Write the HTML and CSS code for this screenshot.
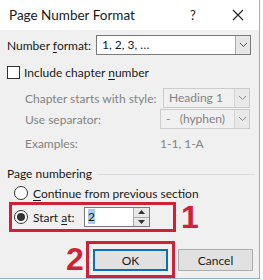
FILE: index.html
```html
<!DOCTYPE html>
<html lang="en">
<head>
  <meta charset="UTF-8">
  <title>Page Number Format</title>
  <link rel="stylesheet" href="styles.css">
</head>
<body>
  <div class="window">
    <!-- title bar -->
    <div class="titlebar">
      <span class="title">Page Number Format</span>
      <span class="help">?</span>
      <span class="close">
        <svg width="12" height="12" viewBox="0 0 12 12"><path d="M1 1 L11 11 M11 1 L1 11" stroke="#222" stroke-width="1.1" fill="none"/></svg>
      </span>
    </div>

    <div class="content">
      <div class="row row-format">
        <span class="label">Number <u>f</u>ormat:</span>
        <div class="select select-format">
          <span class="value">1, 2, 3, …</span>
          <span class="arrow">
            <svg width="9" height="6" viewBox="0 0 9 6"><path d="M1 1 L4.5 4.5 L8 1" stroke="#555" fill="none"/></svg>
          </span>
        </div>
      </div>

      <div class="row row-check">
        <span class="checkbox"></span>
        <span>Include chapter <u>n</u>umber</span>
      </div>

      <div class="sub">
        <div class="row row-style">
          <span class="sub-label">Chapter starts with style:</span>
          <div class="select disabled select-style">
            <span class="value">Heading 1</span>
            <span class="arrow">
              <svg width="9" height="6" viewBox="0 0 9 6"><path d="M1 1 L4.5 4.5 L8 1" stroke="#8a8a8a" fill="none"/></svg>
            </span>
          </div>
        </div>
        <div class="row row-sep">
          <span class="sub-label">Use separator:</span>
          <div class="select disabled select-sep">
            <span class="value">-&nbsp;&nbsp;&nbsp;(hyphen)</span>
            <span class="arrow">
              <svg width="9" height="6" viewBox="0 0 9 6"><path d="M1 1 L4.5 4.5 L8 1" stroke="#8a8a8a" fill="none"/></svg>
            </span>
          </div>
        </div>
        <div class="row row-examples">
          <span class="sub-label">Examples:</span>
          <span class="examples">1-1, 1-A</span>
        </div>
      </div>

      <div class="group-head">
        <span>Page numbering</span>
        <span class="rule"></span>
      </div>

      <div class="row row-continue">
        <span class="radio"></span>
        <span><u>C</u>ontinue from previous section</span>
      </div>

      <div class="row row-start">
        <div class="mark mark-start">
          <span class="radio checked"></span>
          <span class="start-label">Start <u>a</u>t:</span>
          <div class="spin">
            <span class="spin-value"><span class="selected">2</span></span>
            <span class="spin-buttons">
              <span class="spin-btn"><svg width="7" height="4" viewBox="0 0 7 4"><path d="M0 4 L3.5 0 L7 4 Z" fill="#333"/></svg></span>
              <span class="spin-btn"><svg width="7" height="4" viewBox="0 0 7 4"><path d="M0 0 L3.5 4 L7 0 Z" fill="#333"/></svg></span>
            </span>
          </div>
        </div>
        <span class="step step-1">1</span>
      </div>

      <div class="buttons">
        <span class="step step-2">2</span>
        <div class="mark mark-ok">
          <button class="btn btn-default">OK</button>
        </div>
        <button class="btn btn-cancel">Cancel</button>
      </div>
    </div>
  </div>
</body>
</html>
```

FILE: styles.css
```css
body {
  margin: 0;
  background: #ffffff;
  font-family: Lato, 'Open Sans', sans-serif;
  font-size: 12px;
  color: #1a1a1a;
  white-space: nowrap;
}

u {
  text-decoration: underline;
  text-underline-offset: 2px;
}

.window {
  width: 259px;
  height: 278px;
  background: #f0f0f0;
  border-right: 1px solid #8db2d6;
  border-bottom: 1px solid #8db2d6;
  overflow: hidden;
}

/* title bar */
.titlebar {
  height: 30px;
  background: #ffffff;
  display: flex;
  align-items: center;
  padding-left: 9px;
}

.title {
  font-size: 13.5px;
  width: 181px;
}

.help {
  font-size: 13px;
  width: 42px;
}

.close {
  display: flex;
}

.row {
  display: flex;
  align-items: center;
  height: 20px;
}

.row > * {
  flex-shrink: 0;
}

/* number format */
.row-format {
  margin-top: 5px;
  padding-left: 7px;
}

.label {
  width: 89px;
}

.select {
  display: flex;
  height: 20px;
  box-sizing: border-box;
  background: #ffffff;
  border: 1px solid #7a7a7a;
}

.select .value {
  flex: 1;
  padding-left: 5px;
  line-height: 18px;
}

.select .arrow {
  width: 14px;
  display: flex;
  align-items: center;
  justify-content: center;
  background: #e6e6e6;
  border-left: 1px solid #acacac;
}

.select-format {
  width: 155px;
}

.select.disabled {
  background: #f0f0f0;
  border-color: #cccccc;
  color: #838383;
}

.select.disabled .arrow {
  background: #e9e9e9;
  border-left-color: #d4d4d4;
}

/* checkbox */
.row-check {
  margin-top: 7px;
  padding-left: 7px;
}

.checkbox {
  width: 11px;
  height: 11px;
  border: 1px solid #333333;
  background: #ffffff;
  margin-right: 4px;
}

/* chapter options (disabled) */
.sub {
  padding-left: 25px;
  color: #838383;
}

.row-style {
  margin-top: 6px;
}

.row-style .sub-label {
  width: 138px;
}

.select-style {
  width: 87px;
}

.row-sep {
  margin-top: 1px;
}

.row-sep .sub-label {
  width: 135px;
}

.select-sep {
  width: 90px;
}

.row-examples {
  margin-top: 4px;
}

.row-examples .sub-label {
  width: 135px;
}

/* page numbering group */
.group-head {
  display: flex;
  align-items: center;
  height: 20px;
  margin-top: 10px;
  padding-left: 7px;
}

.rule {
  flex: 1;
  height: 1px;
  background: #dcdcdc;
  margin: 2px 4px 0 6px;
}

.radio {
  width: 12px;
  height: 12px;
  border: 1px solid #333333;
  border-radius: 50%;
  background: #ffffff;
  margin-right: 5px;
  display: flex;
  align-items: center;
  justify-content: center;
}

.radio.checked::after {
  content: "";
  width: 8px;
  height: 8px;
  border-radius: 50%;
  background: #333333;
}

.row-continue {
  height: 18px;
  margin-top: 1px;
  padding-left: 14px;
}

.row-start {
  height: 30px;
  padding-left: 9px;
}

.mark {
  border: 3px solid #cf2236;
  box-sizing: border-box;
}

.mark-start {
  width: 167px;
  height: 30px;
  display: flex;
  align-items: center;
  padding-left: 2px;
}

.start-label {
  width: 51px;
}

.spin {
  display: flex;
  width: 66px;
  height: 20px;
  box-sizing: border-box;
  background: #ffffff;
  border: 1px solid #7a7a7a;
}

.spin-value {
  flex: 1;
  padding-left: 3px;
  line-height: 18px;
}

.selected {
  background: #a9cdf0;
}

.spin-buttons {
  width: 15px;
  display: flex;
  flex-direction: column;
  border-left: 1px solid #acacac;
}

.spin-btn {
  flex: 1;
  display: flex;
  align-items: center;
  justify-content: center;
  background: #e8e8e8;
}

.spin-btn + .spin-btn {
  border-top: 1px solid #acacac;
}

.step {
  font-family: 'Liberation Sans', sans-serif;
  font-weight: bold;
  font-size: 32px;
  line-height: 30px;
  color: #cf2236;
}

.step-1 {
  margin-left: 5px;
}

/* buttons */
.buttons {
  display: flex;
  align-items: flex-start;
  margin-top: 9px;
  padding-left: 66px;
}

.step-2 {
  margin-top: 3px;
  width: 20px;
}

.mark-ok {
  width: 89px;
  height: 37px;
  padding: 5px 0 0 4px;
}

.btn {
  width: 75px;
  height: 22px;
  box-sizing: border-box;
  background: #e1e1e1;
  border: 1px solid #adadad;
  font-family: Lato, 'Open Sans', sans-serif;
  font-size: 12px;
  color: #1a1a1a;
  padding: 0;
}

.btn-default {
  border: 2px solid #0a6fb8;
}

.btn-cancel {
  margin-top: 8px;
  margin-left: 3px;
}
```
